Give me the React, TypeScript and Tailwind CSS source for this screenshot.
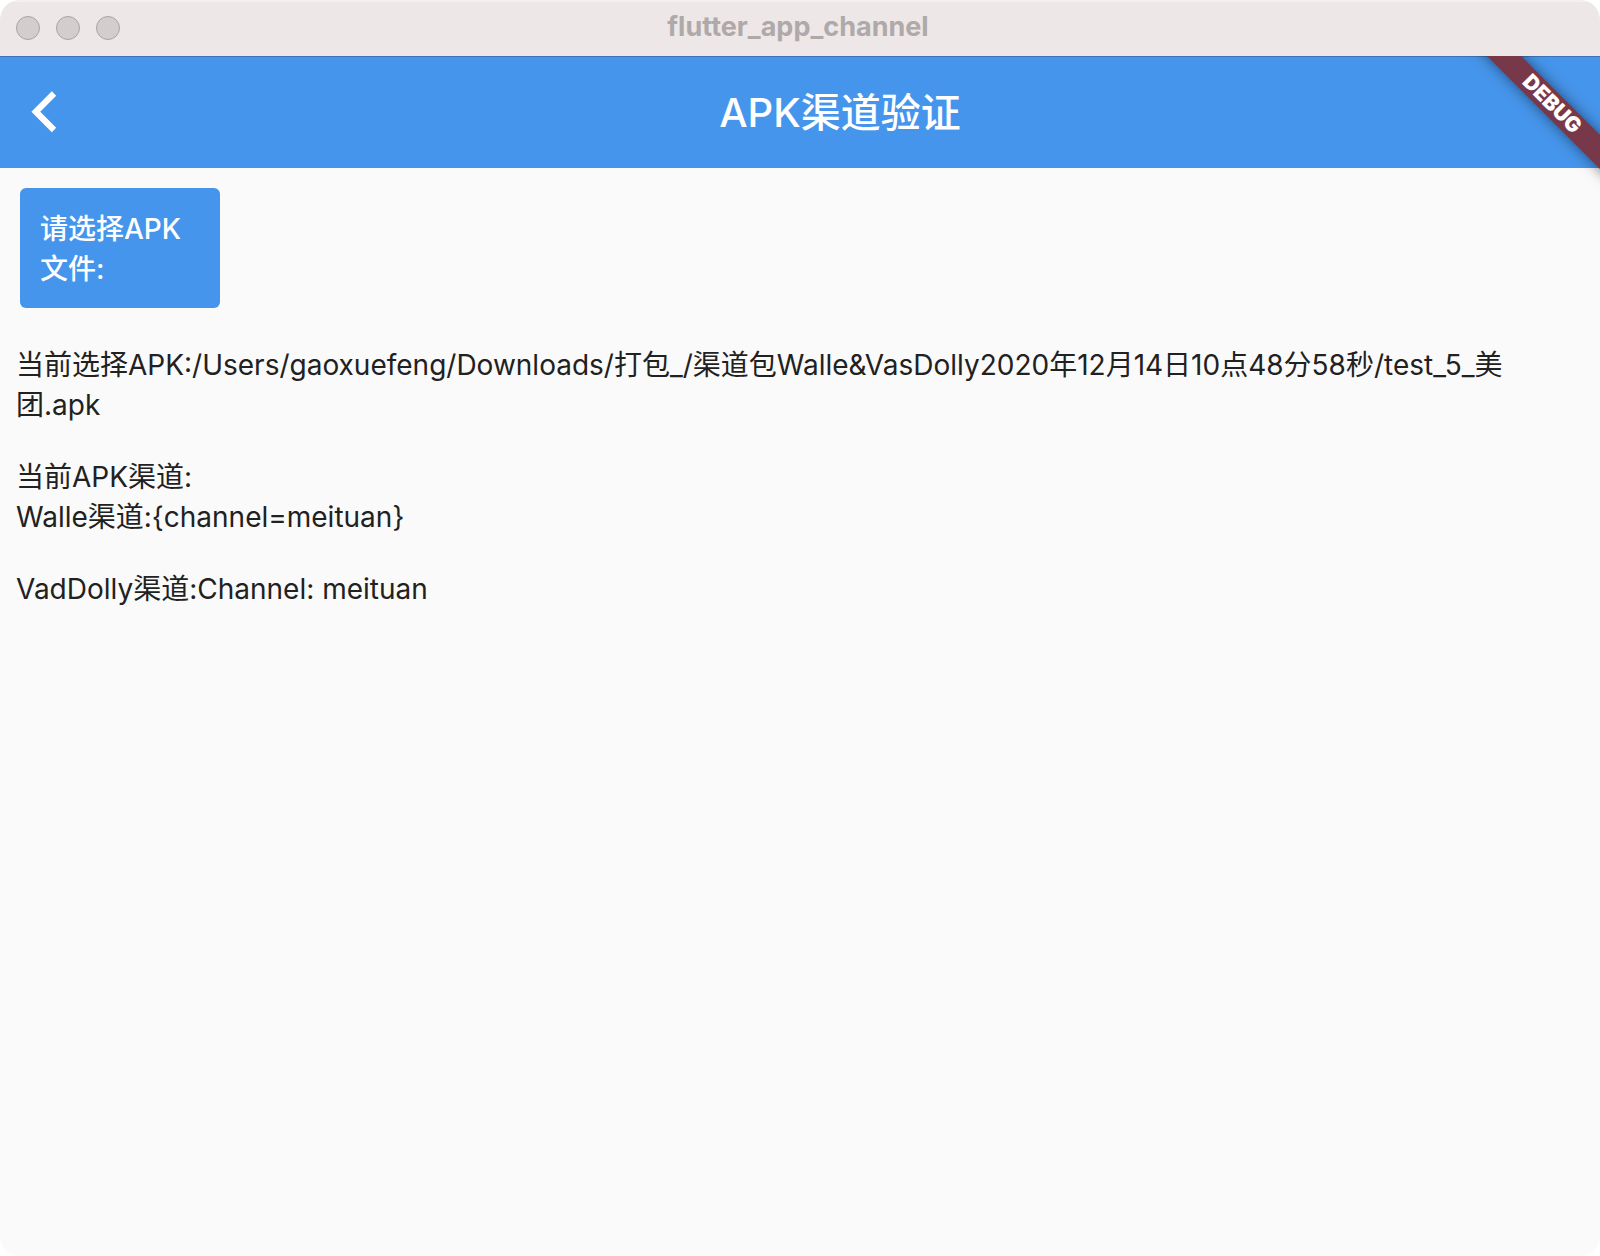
const trafficLights = ["Close", "Minimize", "Zoom"];

function TitleBar() {
  return (
    <div className="relative flex h-14 items-center justify-center border-t-2 border-[#f5f0f0] bg-[#ede7e7] pr-1 pb-1">
      <div className="absolute top-3.5 left-4 flex gap-4">
        {trafficLights.map((name) => (
          <button
            key={name}
            type="button"
            aria-label={name}
            className="size-6 rounded-full border border-[#aaa5a5] bg-[#d3cdcd]"
          />
        ))}
      </div>
      <h1 className="text-[27px] leading-8 font-bold text-[#afa9a9]">flutter_app_channel</h1>
    </div>
  );
}

function DebugBanner() {
  return (
    <div className="pointer-events-none absolute top-0 right-0 size-40 overflow-hidden">
      <div className="absolute top-9 left-3 flex h-6 w-[200px] rotate-45 items-center justify-center bg-[#77384a] text-[21px] leading-6 font-black text-white shadow-[0_0_14px_rgba(0,0,0,0.5)]">
        DEBUG
      </div>
    </div>
  );
}

function AppBar() {
  return (
    <header className="flex h-28 items-center bg-[#4695ec] text-white shadow-[inset_0_1px_0_#3b74b4]">
      <button type="button" aria-label="Back" className="flex h-28 w-20 items-center pl-7">
        <svg width="32" height="48" viewBox="0 0 32 48" fill="none" aria-hidden="true">
          <path d="M26 5.5 7.8 23.8 26 42" stroke="currentColor" strokeWidth="6.2" />
        </svg>
      </button>
      <h2 className="flex-1 pt-0.5 text-center text-[40px] leading-12 font-medium">APK渠道验证</h2>
    </header>
  );
}

export default function App() {
  return (
    <div className="min-h-screen bg-white font-['Inter','Noto_Sans_CJK_SC',sans-serif]">
      <div className="flex min-h-screen flex-col overflow-hidden rounded-[20px] bg-[#fafafa]">
        <TitleBar />
        <div className="relative flex-1">
          <AppBar />
          <main className="text-[28px] leading-10 text-[#212121]">
            <button
              type="button"
              className="m-5 block w-50 rounded-md bg-[#4695ec] px-5 pt-[21px] pb-[19px] text-left font-medium text-white"
            >
              请选择APK文件:
            </button>
            <div className="flex flex-col gap-8 px-4 pt-[17px]">
              <p>
                当前选择APK:/Users/gaoxuefeng/Downloads/打包_/渠道包Walle&amp;VasDolly2020年12月14日10点48分58秒/test_5_美团.apk
              </p>
              <p>
                当前APK渠道:
                <br />
                Walle渠道:&#123;channel=meituan&#125;
              </p>
              <p>VadDolly渠道:Channel: meituan</p>
            </div>
          </main>
          <DebugBanner />
        </div>
      </div>
    </div>
  );
}
